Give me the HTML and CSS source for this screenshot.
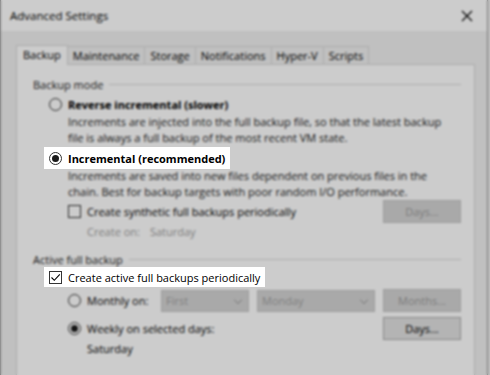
FILE: index.html
```html
<!DOCTYPE html>
<html lang="en">
<head>
    <meta charset="UTF-8">
    <title>Advanced Settings</title>
    <link rel="stylesheet" href="styles.css">
</head>
<body>
    <div class="janela">
        <div class="titulo">
            <span>Advanced Settings</span>
            <svg class="fechar" width="12" height="12" viewBox="0 0 12 12"><path d="M1 1L11 11M11 1L1 11" stroke="#000" stroke-width="1.1"/></svg>
        </div>
        <div class="corpo">
            <div class="abas">
                <div class="aba ativa">Backup</div>
                <div class="aba">Maintenance</div>
                <div class="aba">Storage</div>
                <div class="aba">Notifications</div>
                <div class="aba">Hyper-V</div>
                <div class="aba">Scripts</div>
            </div>
            <div class="painel">
                <div class="grupo"><span>Backup mode</span><div class="linha"></div></div>
                <div class="itens">
                    <div class="opcao forte"><span class="radio"></span>Reverse incremental (slower)</div>
                    <div class="desc">Increments are injected into the full backup file, so that the latest backup<br>file is always a full backup of the most recent VM state.</div>

                    <div class="opcao forte destaque inc"><span class="radio marcado"></span>Incremental (recommended)</div>
                    <div class="desc">Increments are saved into new files dependent on previous files in the<br>chain. Best for backup targets with poor random I/O performance.</div>

                    <div class="sub">
                        <div class="linhabtn">
                            <div class="opcao"><span class="caixa"></span>Create synthetic full backups periodically</div>
                            <button class="btn" disabled>Days...</button>
                        </div>
                        <div class="criar">Create on:<span>Saturday</span></div>
                    </div>
                </div>

                <div class="grupo g2"><span>Active full backup</span><div class="linha"></div></div>
                <div class="itens">
                    <div class="opcao destaque ativo">
                        <span class="caixa"><svg width="11" height="11" viewBox="0 0 11 11"><path d="M1.5 5.5L4.3 8.3L9.8 2.3" fill="none" stroke="#000" stroke-width="1.1"/></svg></span>Create active full backups periodically
                    </div>
                    <div class="sub">
                        <div class="linhabtn mensal">
                            <div class="opcao"><span class="radio"></span>Monthly on:</div>
                            <div class="selecao">
                                <div class="combo c1">First<i></i></div>
                                <div class="combo c2">Monday<i></i></div>
                            </div>
                            <button class="btn" disabled>Months...</button>
                        </div>
                        <div class="linhabtn semanal">
                            <div class="opcao"><span class="radio marcado"></span>Weekly on selected days:</div>
                            <button class="btn">Days...</button>
                        </div>
                        <div class="sabado">Saturday</div>
                    </div>
                </div>
            </div>
        </div>
    </div>
    <div class="veu"></div>
</body>
</html>
```

FILE: styles.css
```css
body{
    margin: 0;
    background: #f0f0f0;
    font-family: "Open Sans", "Noto Sans", sans-serif;
    font-size: 11px;
    color: #000;
    overflow: hidden;
}
.janela{
    width: 486px;
    height: 400px;
    border: 1px solid #9a9a9a;
    border-top: none;
    background: #f0f0f0;
}
.titulo{
    height: 31px;
    background: #fff;
    display: flex;
    align-items: center;
    justify-content: space-between;
    padding: 0 14px 0 9px;
    font-size: 11.5px;
}
.corpo{
    padding: 13px 12px 0 15px;
}
.abas{
    display: flex;
    align-items: flex-end;
    height: 20px;
}
.aba{
    height: 18px;
    line-height: 17px;
    padding: 0 5px;
    border: 1px solid #d9d9d9;
    border-bottom: none;
    margin-left: -1px;
    background: #f0f0f0;
    box-sizing: border-box;
}
.aba.ativa{
    height: 20px;
    background: #fff;
    margin-left: 0;
    padding: 0 6px;
    position: relative;
    top: 1px;
    z-index: 0;
}
.painel{
    background: #fff;
    border: 1px solid #d9d9d9;
    height: 330px;
    padding: 11px 13px 0 16px;
}
.grupo{
    display: flex;
    align-items: center;
    color: #1e1e1e;
    height: 16px;
}
.grupo .linha{
    flex: 1;
    height: 1px;
    background: #dcdcdc;
    margin-left: 6px;
}
.g2{
    margin-top: 11px;
}
.itens{
    padding-left: 16px;
}
.opcao{
    display: flex;
    align-items: center;
    height: 16px;
}
.forte{
    font-weight: 700;
}
.itens > .opcao:first-child{
    margin-top: 4px;
}
.radio{
    width: 11px;
    height: 11px;
    border: 1px solid #333;
    border-radius: 50%;
    margin-right: 6px;
    background: #fff;
    position: relative;
    flex: none;
}
.radio.marcado::after{
    content: "";
    position: absolute;
    left: 2px;
    top: 2px;
    width: 7px;
    height: 7px;
    border-radius: 50%;
    background: #1a1a1a;
}
.caixa{
    width: 11px;
    height: 11px;
    border: 1px solid #333;
    background: #fff;
    margin-right: 6px;
    flex: none;
    display: flex;
}
.desc{
    padding-left: 19px;
    line-height: 16px;
    margin-top: 2px;
    color: #222;
}
.destaque{
    position: relative;
    z-index: 2;
    background: #fff;
    width: max-content;
    height: 22px;
    padding: 0 5px;
    margin-left: -5px;
}
.inc{
    margin-top: 1px;
    margin-bottom: -3px;
}
.itens > .opcao.ativo{
    margin-top: 0;
    height: 20px;
}
.sub{
    padding-left: 19px;
}
.linhabtn{
    display: flex;
    align-items: center;
    justify-content: space-between;
}
.btn{
    width: 78px;
    height: 23px;
    font: inherit;
    background: #e1e1e1;
    border: 1px solid #adadad;
    color: #000;
    padding: 0;
}
.btn:disabled{
    background: #d4d4d4;
    border-color: #c6c6c6;
    color: #9a9a9a;
}
.criar{
    color: #a0a0a0;
    margin-top: 1px;
    padding-left: 19px;
    line-height: 16px;
}
.criar span{
    margin-left: 10px;
}
.mensal{
    margin-top: 2px;
}
.mensal .opcao{
    width: 93px;
}
.selecao{
    display: flex;
    gap: 8px;
    flex: 1;
    padding-right: 8px;
}
.combo{
    height: 22px;
    box-sizing: border-box;
    background: #d4d4d4;
    border: 1px solid #c6c6c6;
    color: #a0a0a0;
    line-height: 20px;
    padding-left: 4px;
    position: relative;
}
.combo i{
    position: absolute;
    right: 7px;
    top: 6px;
    width: 5px;
    height: 5px;
    border-right: 1px solid #a8a8a8;
    border-bottom: 1px solid #a8a8a8;
    transform: rotate(45deg);
}
.c1{
    width: 88px;
}
.c2{
    width: 118px;
}
.semanal{
    margin-top: 5px;
}
.sabado{
    padding-left: 19px;
    line-height: 16px;
    margin-top: 1px;
}
.veu{
    position: fixed;
    inset: 0;
    background: rgba(0, 0, 0, 0.2);
    backdrop-filter: blur(1px);
    z-index: 1;
}
```
